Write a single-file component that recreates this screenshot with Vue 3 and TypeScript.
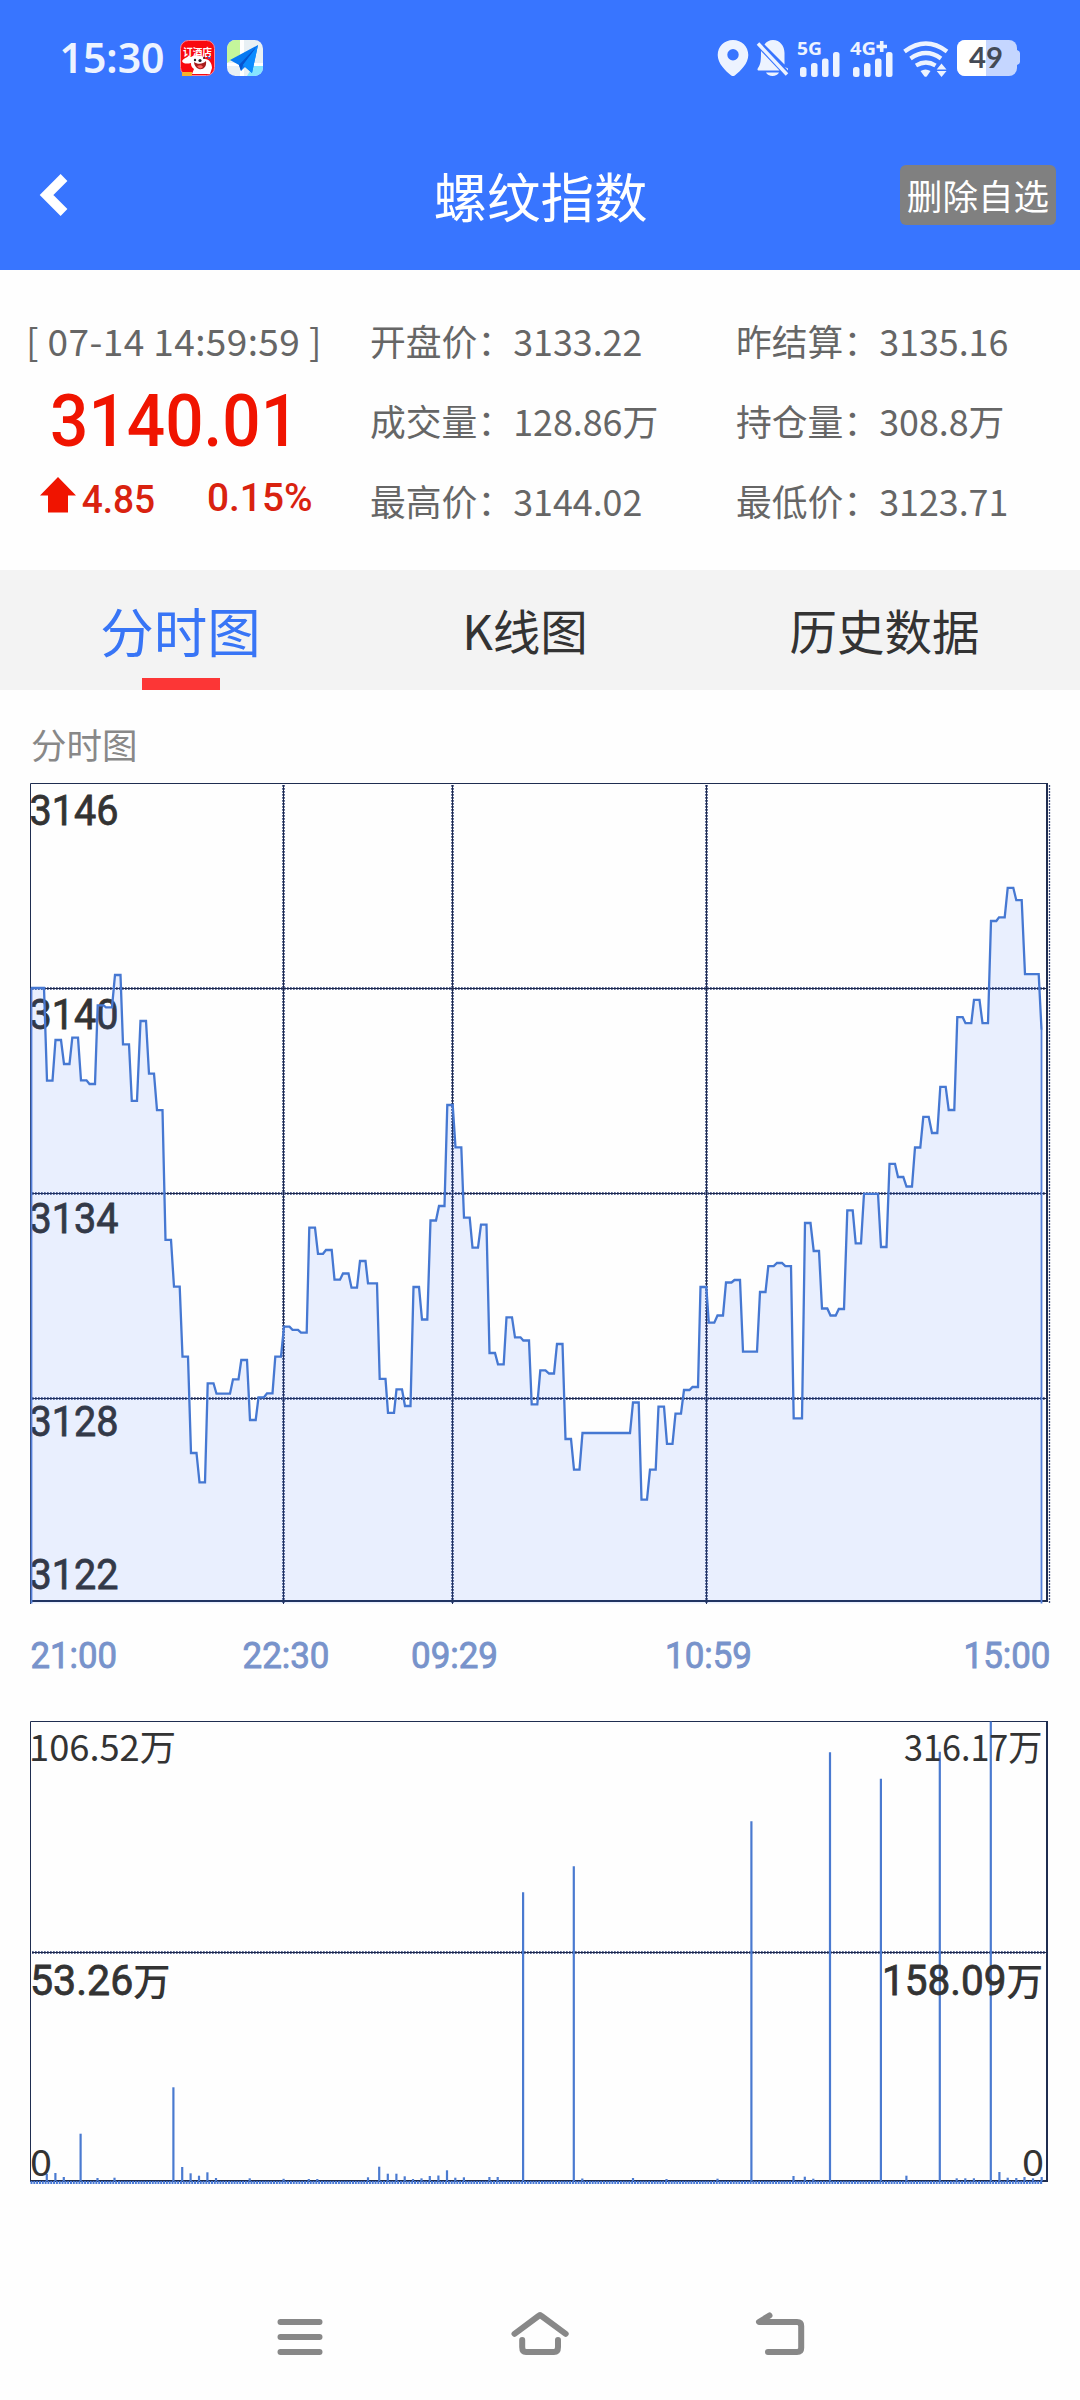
<script setup lang="ts">
type Step = [number, number, number]
type Bar = [number, number]
interface Label {
  text: string
  x: number
  y: number
  width: number
}

const quotes: string[][] = [
  ['开盘价', '3133.22', '昨结算', '3135.16'],
  ['成交量', '128.86万', '持仓量', '308.8万'],
  ['最高价', '3144.02', '最低价', '3123.71'],
]

// Each step is a plateau of the price line: start x, end x, y.
const steps: Step[] = [
  [31, 44, 988], [47, 52.5, 1080.7], [55.5, 61, 1040], [64, 69.5, 1064], [72.3, 78, 1037.7],
  [81, 86.5, 1080.3], [89.5, 95, 1084], [97.7, 103.5, 1005.3], [106, 112, 1007.3], [115, 120.5, 975],
  [123, 129, 1044.3], [131.8, 137, 1100.8], [140.5, 146, 1021], [149, 154, 1073.7], [157, 162.5, 1110.2],
  [165.5, 171, 1239.8], [174, 179.7, 1286.7], [182.5, 188, 1356.7], [191, 196.5, 1453], [199.5, 205, 1482.3],
  [207.7, 213.5, 1383.3], [216.5, 230, 1393.7], [233, 238.5, 1379.3], [241.3, 247, 1360], [250, 255.7, 1420],
  [258.5, 264, 1397.3], [267, 272.5, 1393.3], [275.3, 281, 1356.7], [284, 289.5, 1326.7], [292.5, 298, 1329.8],
  [301, 306.7, 1332.7], [309.3, 315, 1227.7], [318, 323, 1253.8], [326, 331.7, 1250], [334.5, 340, 1279.7],
  [343, 348.5, 1273.5], [351.5, 357, 1287.7], [360, 365.5, 1261], [368, 377, 1283.4], [379.7, 385.5, 1378.8],
  [388, 394, 1412.8], [396.5, 402, 1389.3], [405, 410.5, 1406], [413.5, 419, 1287], [422, 427.3, 1319.5],
  [430.5, 436, 1220.5], [439, 444.5, 1206], [447.3, 452.7, 1105], [455.5, 461.3, 1147.3], [464, 469.7, 1217.7],
  [472.5, 478, 1247.7], [481, 486.5, 1224.7], [489.5, 495, 1353], [498, 503.7, 1364.3], [506.5, 512, 1317.3],
  [515, 520.5, 1337.3], [523.3, 529, 1340.5], [531.7, 537.3, 1404.3], [540.3, 545.5, 1370.3], [549, 554, 1373.5],
  [557, 562.5, 1344], [565.5, 571, 1439], [574, 579.5, 1469.7], [582.5, 630, 1433], [633, 638.7, 1402.5],
  [641.5, 647, 1499.7], [650, 655.7, 1469.7], [658.5, 664, 1406.7], [667, 672.5, 1443.8], [675.5, 681, 1413.7],
  [684, 689.5, 1390], [692.5, 698, 1387], [700.5, 706.3, 1287], [708.8, 714.3, 1322.7], [717.5, 723, 1315.5],
  [726, 731.5, 1282.5], [734.5, 740, 1280], [743, 757, 1351.7], [760, 765.5, 1292], [768.3, 773.7, 1266.2],
  [777, 782, 1263], [785.3, 791, 1266.2], [793.7, 802, 1418.3], [805, 810.5, 1223], [813.7, 819, 1251],
  [822, 827.3, 1308.5], [830.5, 835.7, 1315.5], [838.8, 844, 1309], [847.3, 852.7, 1210.4], [855.7, 861, 1243.3],
  [864, 878, 1193.8], [881, 886.5, 1247], [889.5, 895, 1163.8], [898, 903.3, 1177], [906.5, 912, 1186.5],
  [915, 920.3, 1147.5], [923.3, 928.7, 1116.8], [932, 937.3, 1133], [940.3, 945.7, 1086.8], [948.7, 954.3, 1110],
  [957.3, 962.7, 1017.2], [965.5, 971.3, 1023.2], [974, 979.5, 999.8], [982.5, 988, 1023.2], [991, 996.3, 921],
  [999, 1004.7, 917.3], [1007.7, 1013.3, 887.8], [1016.3, 1021.7, 900.2], [1025, 1038.7, 974.2],
]

const pricePoints = [...steps.flatMap(([a, b, y]) => [`${a},${y}`, `${b},${y}`]), '1041.5,1029.5'].join(' ')
const areaPoints = `31,1603.5 ${pricePoints} 1041.5,1603.5`

const bars: Bar[] = [
  [46.8, 2174], [55.4, 2173], [63.8, 2177], [80.6, 2133.7], [97.5, 2178], [114.5, 2177.7], [173.4, 2087.3],
  [182.2, 2167], [190.6, 2173.3], [199, 2175.7], [207.4, 2172.3], [216, 2178], [249.7, 2178.3], [283.6, 2178.8],
  [308.8, 2179], [317.3, 2179], [368, 2177.3], [379.2, 2166.7], [387.8, 2173.7], [396.4, 2173.7], [404.7, 2176.3],
  [413, 2179], [421.5, 2178.3], [429.8, 2176], [438.4, 2175.5], [447, 2170.3], [455.3, 2177.7], [463.9, 2177.3],
  [489.4, 2177], [497.7, 2177], [523.1, 1892.3], [573.8, 1866.3], [582.3, 2178.5], [633, 2178], [666.5, 2179],
  [717.5, 2178.7], [751.4, 1821.3], [793.5, 2176], [804.8, 2176.7], [813.3, 2178.7], [830, 1752.2], [880.9, 1778.7],
  [906.4, 2175.7], [939.8, 1751.8], [956.7, 2178.3], [965.3, 2178.3], [973.9, 2178.3], [990.8, 1721.5],
  [999.4, 2172], [1007.7, 2177.7], [1016.3, 2178], [1024.5, 2177], [1033, 2178.3], [1041.7, 2177],
]

const priceLabels: Label[] = [
  { text: '3146', x: 29.5, y: 825, width: 89 },
  { text: '3140', x: 29.5, y: 1029, width: 89 },
  { text: '3134', x: 29.5, y: 1233, width: 89 },
  { text: '3128', x: 29.5, y: 1436, width: 89 },
  { text: '3122', x: 29.5, y: 1589, width: 89 },
]
const timeLabels: Label[] = [
  { text: '21:00', x: 30.5, y: 1668, width: 86.5 },
  { text: '22:30', x: 242.5, y: 1668, width: 87 },
  { text: '09:29', x: 411, y: 1668, width: 87 },
  { text: '10:59', x: 665, y: 1668, width: 87 },
  { text: '15:00', x: 963.5, y: 1668, width: 87 },
]
const signalBars = [[0, 10], [11, 14], [22, 18.5], [33, 25]]
const rowLines = [988.5, 1193.5, 1398.5]
const columnLines = [283.5, 452.5, 706.5]
</script>

<template>
  <div class="screen">
    <header class="header">
      <div class="status">
        <div class="status-left">
          <svg class="clock" width="112" height="60" viewBox="-3 -8 112 60">
            <text x="-.5" y="37" textLength="105" lengthAdjust="spacingAndGlyphs">15:30</text>
          </svg>
          <svg class="app" width="35" height="36" viewBox="0 0 35 36">
            <rect x=".5" y=".5" width="34" height="35" rx="8" fill="#f9090f" stroke="#f58b9d" />
            <text class="badge" x="3" y="15.500" textLength="29" lengthAdjust="spacingAndGlyphs">订酒店</text>
            <path d="M2 36v-4h10v4z" fill="#f5b12d" />
            <path d="M2 21c2-3 6-5 9-4c4-3 12-2 14 2c4 0 7 4 7 9l-2 6H12l2-5c-3-2-3-4-3-6c-4 1-8 1-9-2z" fill="#fff" />
            <path d="M14 22c4 3 9 2 12-1c1 6-3 9-7 8c-3-1-5-4-5-7z" fill="#a51c1b" />
            <path d="M17 26c3-1 5-1 6 1c-2 2-4 2-6-1z" fill="#ff625d" />
            <circle cx="15" cy="20" r="1.2" fill="#222" /><circle cx="20" cy="20.5" r="1.6" fill="#222" /><circle cx="24" cy="18" r="1" fill="#222" />
            <path d="M27 16l4 3M31 16l-3 3" stroke="#3d64cc" />
          </svg>
          <svg class="app" width="36" height="36" viewBox="0 0 36 36">
            <clipPath id="round"><rect width="36" height="36" rx="8.5" /></clipPath>
            <g clip-path="url(#round)">
              <rect width="36" height="36" fill="#e8f0f4" />
              <path d="M0 0h14v14L0 23z" fill="#c4f69b" />
              <path d="M13 0h4v36h-4zM0 23h36v3H0z" fill="#fff" />
              <path d="M26 26h10v10H20z" fill="#86e5ff" />
              <path d="M3 20L31 5L25 33L18 27L14 31L12 25z" fill="#0879f2" />
              <path d="M31 5L12 25L14 31L16 25z" fill="#0754cf" />
              <path d="M31 5L25 33L16 25z" fill="#0c8bff" />
            </g>
          </svg>
        </div>
        <svg class="status-icons" width="306" height="44" viewBox="716 36 306 44">
          <path fill-rule="evenodd" d="M733 40c-8.700 0-15.300 6.500-15.300 15c0 8.500 7.500 15.500 13.500 20.500q1.800 1.200 3.600 0c6-5 13.500-12 13.500-20.500c0-8.500-6.600-15-15.300-15zM733 49a5.700 5.700 0 1 1 0 11.400a5.700 5.700 0 1 1 0-11.400z" />
          <path d="M764.500 44.500c2-3 5-4.500 8.500-4.500c7 0 11.500 6 11.500 13v11.500zM761 51L779.500 70.500H759c-1.500 0-2-1-1-2.500c3-4 3-8.500 3-17zM766 72.500h13c-1 2.300-3.500 3.500-6.500 3.500s-5.500-1.200-6.500-3.500zM785 67l3 1.500v2z" />
          <path d="M758 43.500L787 74.500" class="slash" />
          <text x="797" y="54.500" class="net" textLength="25" lengthAdjust="spacingAndGlyphs">5G</text>
          <text x="850" y="54.500" class="net" textLength="26" lengthAdjust="spacingAndGlyphs">4G</text>
          <path d="M876.500 46.500h10.500M881.700 41v11" stroke="#edf3ff" stroke-width="3.600" />
          <template v-for="origin in [800, 853]" :key="origin">
            <rect v-for="[dx, h] in signalBars" :key="dx" :x="origin + dx" :y="77 - h" width="6.500" :height="h" rx="2.500" />
          </template>
          <g class="arcs">
            <path d="M904.500 51.500Q926 35.500 947 51.500" />
            <path d="M910.500 58.500Q926 47.500 941 58.500" />
            <path d="M916 65.500Q926 59.500 935.500 65.500" />
          </g>
          <path d="M920.500 71q5-3 10 0l-3.600 5.200q-1.300 1.200-2.600 0zM941.500 63.500l5 6h-9.800zM936.700 71h9.800l-5 6z" />
          <rect x="957" y="40" width="60" height="36" rx="8" fill="#c5d6ff" />
          <path d="M1017 50q3 1 3 3v9q0 2-3 3z" fill="#c5d6ff" />
          <path d="M965 40h21v36h-21a8 8 0 0 1-8-8v-20a8 8 0 0 1 8-8z" fill="#fff" />
          <text x="969" y="68" class="battery" textLength="34" lengthAdjust="spacingAndGlyphs">49</text>
        </svg>
      </div>
      <div class="titlebar">
        <svg class="back" width="32" height="48" viewBox="0 0 32 48">
          <path d="M26 6.500L8.500 24L26 41.500" />
        </svg>
        <h1>螺纹指数</h1>
        <button class="remove">删除自选</button>
      </div>
    </header>

    <section class="summary">
      <div class="latest">
        <div class="date">[ 07-14 14:59:59 ]</div>
        <div class="price">3140.01</div>
        <div class="change">
          <svg width="36" height="36" viewBox="0 0 36 36"><path d="M18 0L36 18.500H28V35.500H8V18.500H0z" /></svg>
          <span class="diff">4.85</span>
          <span class="rate">0.15%</span>
        </div>
      </div>
      <div class="quotes">
        <div v-for="row in quotes" :key="row[0]" class="quote-row">
          <div class="quote">{{ row[0] }}：<span>{{ row[1] }}</span></div>
          <div class="quote">{{ row[2] }}：<span>{{ row[3] }}</span></div>
        </div>
      </div>
    </section>

    <nav class="tabs">
      <div class="tab active">分时图</div>
      <div class="tab kline">K线图</div>
      <div class="tab history">历史数据</div>
    </nav>

    <div class="caption">分时图</div>

    <svg class="chart" width="1080" height="915" viewBox="0 775 1080 915">
      <g v-for="y in rowLines" :key="y" class="grid">
        <path class="dash" :d="`M32 ${y}H1046`" /><path :d="`M32 ${y}H1046`" />
      </g>
      <g v-for="x in columnLines" :key="x" class="grid">
        <path class="dash" :d="`M${x} 785V1604`" /><path :d="`M${x} 785V1604`" />
      </g>
      <path class="frame" d="M30.500 1604V783.500H1048" />
      <path class="frame thick" d="M31 1601H1048M1047 783V1602" />
      <path class="grid-edge" d="M1049.500 785V1604" />
      <text v-for="l in priceLabels" :key="l.text" class="num" :x="l.x" :y="l.y" :textLength="l.width" lengthAdjust="spacingAndGlyphs">{{ l.text }}</text>
      <polygon class="area" :points="areaPoints" />
      <path class="edge" d="M31.500 988V1603.500M1041.500 1029V1603.500" />
      <polyline class="line" :points="pricePoints" />
      <text v-for="l in timeLabels" :key="l.text" class="time" :x="l.x" :y="l.y" :textLength="l.width" lengthAdjust="spacingAndGlyphs">{{ l.text }}</text>
    </svg>

    <svg class="chart" width="1080" height="500" viewBox="0 1690 1080 500">
      <g class="grid"><path class="dash" d="M32 1952.500H1046" /><path d="M32 1952.500H1046" /></g>
      <path class="frame" d="M30.500 2181V1721.500H1048" />
      <path class="frame thick" d="M30 2181H1048M1047 1721V2182" />
      <path v-for="[x, y] in bars" :key="x" class="bar" :d="`M${x} ${y}V2181`" />
      <path class="ticks" d="M30.500 2182.500H1043" />
      <g class="vol">
        <text x="29" y="1761" textLength="147" lengthAdjust="spacingAndGlyphs">106.52万</text>
        <text x="904" y="1761" textLength="138.500" lengthAdjust="spacingAndGlyphs">316.17万</text>
        <text x="30" y="2175.500" textLength="22" lengthAdjust="spacingAndGlyphs">0</text>
        <text x="1022" y="2175.500" textLength="22" lengthAdjust="spacingAndGlyphs">0</text>
      </g>
      <text class="num" x="30" y="1995" textLength="140.500" lengthAdjust="spacingAndGlyphs">53.26<tspan class="unit">万</tspan></text>
      <text class="num" x="882" y="1995" textLength="161" lengthAdjust="spacingAndGlyphs">158.09<tspan class="unit">万</tspan></text>
    </svg>

    <footer class="softkeys">
      <svg width="60" height="60" viewBox="270 2307 60 60"><path d="M280.500 2322H319.500M280.500 2337H319.500M280.500 2352H319.500" /></svg>
      <svg width="60" height="60" viewBox="510 2307 60 60">
        <path d="M514.500 2333.800L538.500 2316Q540 2314.500 541.500 2316L565.700 2333.800" />
        <path d="M522.200 2340V2347Q522.200 2352 526 2352H554Q558 2352 558 2347V2340" />
      </svg>
      <svg width="60" height="60" viewBox="750 2307 60 60">
        <path d="M769.500 2315.500L759 2322H797Q801.200 2322 801.200 2326V2348Q801.200 2352 797 2352H768" />
      </svg>
    </footer>
  </div>
</template>

<style>
body {
  margin: 0;
  background: #fefefe;
}
</style>

<style scoped>
.screen {
  width: 1080px;
  height: 2400px;
  display: flex;
  flex-direction: column;
  overflow: hidden;
  background: #fefefe;
  font-family: "Noto Sans CJK SC", "Noto Sans", sans-serif;
  color: #333;
}
svg {
  display: block;
  flex: none;
}
.header {
  height: 270px;
  background: #3875ff;
  color: #fff;
}
.status {
  height: 116px;
  display: flex;
  align-items: center;
  justify-content: space-between;
  padding: 0 58px 0 57px;
  box-sizing: border-box;
}
.status-left {
  display: flex;
  align-items: center;
  gap: 11px;
}
.app {
  overflow: visible;
}
.app + .app {
  margin-left: 1px;
}
.clock text {
  font: 600 41px "Noto Sans", sans-serif;
  fill: #edf3ff;
}
.badge {
  font: 700 10px "Noto Sans CJK SC", sans-serif;
  fill: #fff;
}
.status-icons {
  fill: #edf3ff;
}
.slash {
  stroke: #edf3ff;
  stroke-width: 3.5;
}
.net {
  font: 700 18px "Noto Sans", sans-serif;
}
.battery {
  font: 700 28px Lato, sans-serif;
  fill: #444a55;
}
.arcs {
  fill: none;
  stroke: #edf3ff;
  stroke-width: 4.2;
}
.titlebar {
  height: 154px;
  display: flex;
  align-items: center;
  justify-content: space-between;
  padding: 3px 24px 0 38px;
  box-sizing: border-box;
}
.back {
  margin-right: 111px;
}
.back path {
  fill: none;
  stroke: #fff;
  stroke-width: 9.6;
}
h1 {
  margin: 0;
  font-size: 53.5px;
  font-weight: 400;
  line-height: 80px;
}
.remove {
  width: 156px;
  height: 60px;
  padding: 0;
  border: 0;
  border-radius: 6px;
  background: #808080;
  color: #fff;
  font: 400 35.6px/60px "Noto Sans CJK SC", sans-serif;
}
.summary {
  height: 300px;
  display: flex;
  box-sizing: border-box;
  padding-top: 30px;
  color: #666;
}
.latest {
  flex: none;
  width: 370px;
  display: flex;
  flex-direction: column;
}
.date {
  height: 80px;
  padding-left: 26px;
  font-size: 37px;
  line-height: 80px;
  letter-spacing: 0.4px;
  white-space: pre;
}
.price {
  height: 80px;
  padding-left: 50px;
  font: 500 73px/82px Roboto, sans-serif;
  color: #f01400;
  transform: scaleX(0.925);
  transform-origin: 50px 0;
}
.change {
  height: 80px;
  display: flex;
  align-items: center;
  padding-left: 40px;
  font: 500 39px/80px Roboto, sans-serif;
  color: #d9220f;
}
.change svg {
  margin-top: -10px;
  fill: #f01400;
}
.diff,
.rate {
  display: block;
  width: 125px;
  transform: scaleX(0.95);
  transform-origin: 0 0;
}
.diff {
  padding-left: 6px;
  line-height: 78px;
}
.rate {
  line-height: 72px;
  padding-bottom: 5px;
}
.quotes {
  flex: none;
  width: 710px;
}
.quote-row {
  display: flex;
  height: 80px;
}
.quote {
  flex: none;
  width: 366px;
  font-size: 35.8px;
  line-height: 80px;
  white-space: nowrap;
}
.quote:last-child {
  width: 344px;
}
.rate {
  transform: scaleX(0.995);
}
.tabs {
  height: 120px;
  display: flex;
  background: #f3f3f3;
}
.tab {
  position: relative;
  width: 361px;
  font-size: 47.5px;
  line-height: 119px;
  text-align: center;
}
.kline {
  width: 328px;
}
.history {
  width: 391px;
}
.active {
  font-size: 53.500px;
  color: #3875f6;
}
.active::after {
  content: "";
  position: absolute;
  left: 142px;
  bottom: 0;
  width: 78px;
  height: 12px;
  background: #fc3636;
}
.caption {
  height: 85px;
  padding-left: 31px;
  font-size: 35.500px;
  line-height: 108px;
  color: #888;
}
.grid path {
  stroke: #1f2a4d;
  stroke-width: 1;
}
.grid .dash {
  stroke: #5a6894;
  stroke-width: 3;
  stroke-dasharray: 1.7 1.3;
}
.grid-edge {
  stroke: #44527e;
  stroke-width: 1.3;
  stroke-dasharray: 2 1;
}
.frame {
  fill: none;
  stroke: #1f2d50;
  stroke-width: 1;
}
.thick {
  stroke-width: 2;
}
.area {
  fill: rgba(56, 117, 255, 0.105);
}
.edge {
  stroke: #5580da;
  stroke-width: 1.8;
}
.line {
  fill: none;
  stroke: #4678d2;
  stroke-width: 2.3;
}
.bar {
  stroke: #4a7ad0;
  stroke-width: 2.2;
}
.ticks {
  stroke: #4678d6;
  stroke-width: 3;
  stroke-dasharray: 2 0.82;
}
.num {
  font: 400 42px Roboto, "Noto Sans CJK SC", sans-serif;
  fill: #333;
  stroke: #333;
  stroke-width: 0.8;
}
.unit {
  font-weight: 500;
  font-size: 38px;
  stroke: none;
}
.time {
  font: 400 36.5px Roboto, sans-serif;
  fill: #7893cb;
  stroke: #7893cb;
  stroke-width: 0.9;
}
.vol text {
  font: 400 36px "Noto Sans CJK SC", sans-serif;
  fill: #333;
}
.softkeys {
  flex: 1;
  display: flex;
  justify-content: center;
  align-items: flex-start;
  gap: 180px;
  padding-top: 117px;
}
.softkeys path {
  fill: none;
  stroke: #888;
  stroke-width: 6;
  stroke-linecap: round;
  stroke-linejoin: round;
}
</style>
